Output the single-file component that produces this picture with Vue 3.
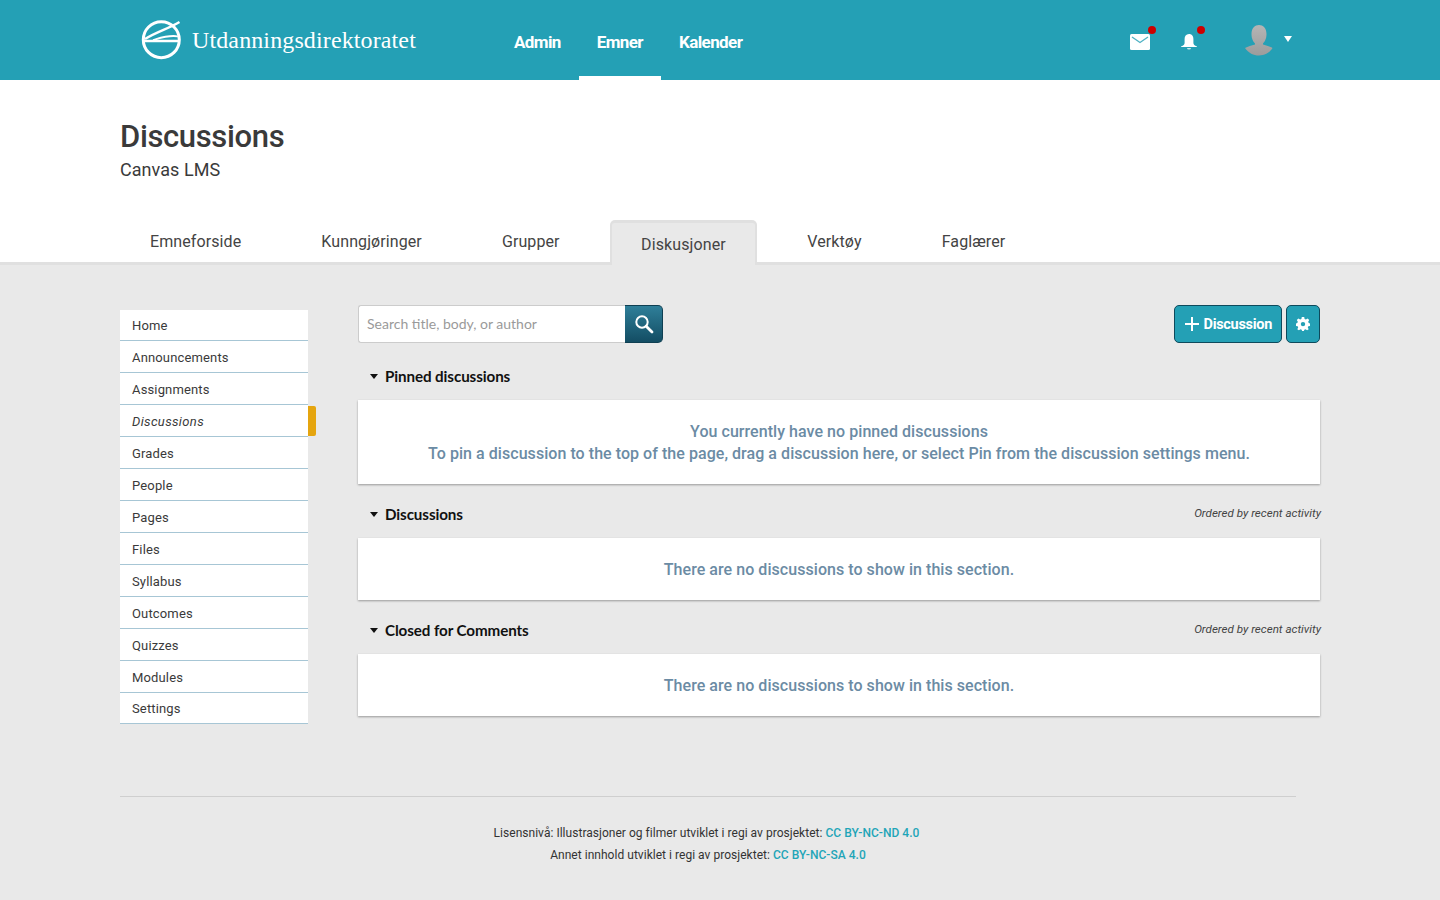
<script setup>
const tabs = ['Emneforside', 'Kunngjøringer', 'Grupper', 'Diskusjoner', 'Verktøy', 'Faglærer']
const side = ['Home', 'Announcements', 'Assignments', 'Discussions', 'Grades', 'People', 'Pages', 'Files', 'Syllabus', 'Outcomes', 'Quizzes', 'Modules', 'Settings']
</script>

<template>
  <div class="page">
    <header class="top">
      <div class="brand">
        <svg class="logo" width="42" height="42" viewBox="0 0 42 42" fill="none" stroke="#fff">
          <circle cx="21.3" cy="20.7" r="18" stroke-width="3" />
          <path d="M4 22H39" stroke-width="2.6" />
          <path d="M5 20C18 12 28 10 39.5 3" stroke-width="2.4" />
          <path d="M13 21C20 19 30 15.5 38 17.5" stroke-width="1.8" />
        </svg>
        <span class="brand-name">Utdanningsdirektoratet</span>
      </div>
      <nav class="mainnav">
        <a>Admin</a>
        <a class="on">Emner</a>
        <a>Kalender</a>
      </nav>
      <div class="tools">
        <span class="tool mail">
          <svg width="20" height="16" viewBox="0 0 20 16">
            <rect width="20" height="16" rx="1.5" fill="#fff" />
            <path d="M2 3l8 5.5L18 3" fill="none" stroke="#4fb2c4" stroke-width="1.3" />
          </svg>
          <i class="dot"></i>
        </span>
        <span class="tool bell">
          <svg width="16" height="16" viewBox="0 0 16 16" fill="#fff">
            <path d="M8 0C5 0 3.6 2.2 3.6 5V9C3.6 10.5 2.5 11.5 0 12.6V13H16V12.6C13.5 11.5 12.4 10.5 12.4 9V5C12.4 2.2 11 0 8 0Z" />
            <path d="M6 14.2H10C9.8 15.8 6.2 15.8 6 14.2Z" />
          </svg>
          <i class="dot"></i>
        </span>
        <span class="avatar">
          <svg width="28" height="31" viewBox="0 0 28 31">
            <defs>
              <linearGradient id="av" x1="0" y1="0" x2="0" y2="1">
                <stop offset="0" stop-color="#b5b5b5" />
                <stop offset="1" stop-color="#9c9c9c" />
              </linearGradient>
            </defs>
            <path fill="url(#av)" d="M14 0C18 0 21.5 3 21.5 9C21.5 14 19.5 17 18 18.5V19.5C21.5 20.5 25 21.5 27.5 23C24.5 28 19.5 30.5 14 30.5C8.5 30.5 3.5 28 0 23C3 21.5 6.5 20.5 10 19.5V18.5C8.5 17 6.5 14 6.5 9C6.5 3 10 0 14 0Z" />
          </svg>
          <i class="caret"></i>
        </span>
      </div>
    </header>

    <section class="title">
      <h1>Discussions</h1>
      <p>Canvas LMS</p>
    </section>

    <div class="tabs">
      <a v-for="t in tabs" :key="t" :class="{ active: t === 'Diskusjoner' }">{{ t }}</a>
    </div>

    <div class="body">
      <aside class="side">
        <a v-for="s in side" :key="s" :class="{ cur: s === 'Discussions' }">{{ s }}</a>
      </aside>

      <main class="main">
        <div class="bar">
          <div class="search">
            <span class="input">Search title, body, or author</span>
            <button class="sbtn" aria-label="Search">
              <svg width="20" height="20" viewBox="0 0 20 20" fill="none" stroke="#fff">
                <circle cx="8" cy="8" r="5.7" stroke-width="2" />
                <path d="M12.2 12.2L18 18" stroke-width="2.8" stroke-linecap="round" />
              </svg>
            </button>
          </div>
          <div class="actions">
            <button class="btn add">
              <svg width="14" height="14" viewBox="0 0 14 14" stroke="#fff" stroke-width="2"><path d="M7 0V14M0 7H14" /></svg>
              Discussion
            </button>
            <button class="btn gear" aria-label="Settings">
              <svg width="14" height="14" viewBox="0 0 14 14">
                <path fill="#fff" fill-rule="evenodd" d="M5.8 0H8.2L8.6 1.9L9.9 2.5L11.6 1.5L13.2 3.1L12.2 4.8L12.7 6L14 6.6V8.9L12.3 9.3L11.8 10.5L12.7 12.2L11.1 13.3L9.5 12.3L8.3 12.8L7.9 14H6.1L5.7 12.8L4.5 12.3L2.9 13.3L1.3 12.2L2.2 10.5L1.7 9.3L0 8.9V6.6L1.3 6L1.8 4.8L0.8 3.1L2.4 1.5L4.1 2.5L5.4 1.9ZM7 4.9A2.2 2.2 0 1 0 7 9.3A2.2 2.2 0 1 0 7 4.9Z" />
              </svg>
            </button>
          </div>
        </div>

        <div class="sec-head first">
          <h2><i class="tri"></i>Pinned discussions</h2>
        </div>
        <div class="card pinned">
          <p>You currently have no pinned discussions</p>
          <p>To pin a discussion to the top of the page, drag a discussion here, or select Pin from the discussion settings menu.</p>
        </div>

        <div class="sec-head">
          <h2><i class="tri"></i>Discussions</h2>
          <em>Ordered by recent activity</em>
        </div>
        <div class="card">
          <p>There are no discussions to show in this section.</p>
        </div>

        <div class="sec-head">
          <h2><i class="tri"></i>Closed for Comments</h2>
          <em>Ordered by recent activity</em>
        </div>
        <div class="card">
          <p>There are no discussions to show in this section.</p>
        </div>
      </main>
    </div>

    <footer class="foot">
      <p class="l1">Lisensnivå: Illustrasjoner og filmer utviklet i regi av prosjektet: <a>CC BY-NC-ND 4.0</a></p>
      <p>Annet innhold utviklet i regi av prosjektet: <a>CC BY-NC-SA 4.0</a></p>
    </footer>
  </div>
</template>

<style>
html, body { margin: 0; background: #e9e9e9; }
</style>

<style scoped>
* { box-sizing: border-box; }
.page { height: 900px; overflow: hidden; background: #e9e9e9; font-family: Roboto, "Noto Sans", sans-serif; color: #333; }
p, h1, h2 { margin: 0; }

.top { height: 80px; background: #24a0b5; display: flex; align-items: stretch; padding-left: 140px; color: #fff; }
.brand { width: 356px; display: flex; align-items: center; gap: 10px; padding-bottom: 1px; }
.logo { flex: none; }
.brand-name { font-family: "Liberation Serif", serif; font-size: 24px; letter-spacing: 0.12px; position: relative; top: 1px; }
.mainnav { display: flex; }
.mainnav a { padding: 34px 18px 0; font-size: 17px; font-weight: 700; letter-spacing: -0.6px; border-bottom: 4px solid transparent; line-height: 17px; }
.mainnav a.on { border-bottom-color: #fff; }
.tools { margin-left: auto; width: 310px; flex: none; position: relative; }
.tool { position: absolute; display: block; }
.tool svg, .avatar svg { display: block; }
.mail { left: 0; top: 34px; }
.bell { left: 51px; top: 34px; }
.dot { position: absolute; width: 8px; height: 8px; border-radius: 50%; background: #cc0000; }
.mail .dot { left: 18px; top: -8px; }
.bell .dot { left: 16px; top: -8px; }
.avatar { position: absolute; left: 115px; top: 25px; }
.caret { position: absolute; left: 39px; top: 11px; width: 0; height: 0; border-left: 4px solid transparent; border-right: 4px solid transparent; border-top: 6px solid #fff; }

.title { background: #fff; height: 140px; padding: 38px 120px 0; }
h1 { font-size: 31px; font-weight: 500; line-height: 38px; color: #3a3a3a; letter-spacing: -0.35px; }
.title p { font-size: 18px; line-height: 24px; margin-top: 2px; color: #3a3a3a; letter-spacing: 0.05px; }

.tabs { background: #fff; height: 45px; padding-left: 120px; display: flex; gap: 20px; border-bottom: 3px solid #e0e0e0; }
.tabs a { padding: 1px 30px 0; font-size: 16px; line-height: 42px; color: #444; letter-spacing: 0.1px; height: 42px; }
.tabs a.active { height: 45px; background: #e9e9e9; border: 3px solid #e0e0e0; border-bottom: 0; border-width: 3px 2px 0; border-radius: 5px 5px 0 0; padding: 0 29.5px; line-height: 44px; position: relative; }

.body { display: flex; align-items: flex-start; padding-left: 120px; }
.side { width: 188px; margin-top: 45px; display: flex; flex-direction: column; background: #fff; position: relative; }
.side a { height: 32px; padding: 9px 12px 0; font-size: 13px; line-height: 16px; color: #3a3a3a; letter-spacing: 0.15px; border-bottom: 1px solid #a7c6d5; position: relative; }
.side a:first-child, .side a:last-child { height: 31px; padding-top: 8px; }
.side a.cur { font-style: italic; letter-spacing: 0.35px; }
.side a.cur::after { content: ""; position: absolute; left: 188px; top: 1px; width: 8px; height: 30px; background: #e5a50f; border-radius: 0 2px 2px 0; }

.main { width: 962px; margin-left: 50px; margin-top: 40px; }
.bar { display: flex; justify-content: space-between; height: 38px; }
.search { display: flex; width: 305px; }
.input { flex: 1; height: 38px; background: #fff; border: 1px solid #ccc; border-right: 0; border-radius: 3px 0 0 3px; padding-left: 8px; font-family: Lato, sans-serif; font-size: 14px; line-height: 36px; color: #9a9a9a; }
.sbtn { width: 38px; height: 38px; padding: 0; border: 1px solid #0f3f52; border-left: 0; border-radius: 0 5px 5px 0; background: linear-gradient(#2f7f99, #134d63); display: flex; align-items: center; justify-content: center; }
.actions { display: flex; gap: 4px; }
.btn { height: 38px; border: 1px solid #0e4a5c; border-radius: 5px; background: #24a0b5; color: #fff; display: flex; align-items: center; justify-content: center; padding: 0; font-family: Roboto, sans-serif; font-size: 14.5px; font-weight: 700; letter-spacing: -0.3px; }
.add { width: 108px; gap: 4.5px; padding-left: 1px; }
.gear { width: 34px; }

.sec-head { height: 22px; margin-top: 19px; margin-bottom: 13px; display: flex; justify-content: space-between; align-items: center; }
.sec-head.first { margin-top: 22px; margin-bottom: 13px; }
h2 { font-family: Lato, sans-serif; font-size: 15.2px; font-weight: 700; color: #111; line-height: 22px; display: flex; align-items: center; padding-left: 12px; letter-spacing: -0.1px; }
.tri { width: 0; height: 0; border-left: 4px solid transparent; border-right: 4px solid transparent; border-top: 5.5px solid #111; margin-right: 7px; }
.sec-head em { font-size: 11.6px; color: #444; margin-top: -2px; margin-right: -1px; }

.card { background: #fff; box-shadow: 0 1px 2px rgba(0,0,0,0.35); height: 62px; padding-top: 2px; display: flex; flex-direction: column; align-items: center; justify-content: center; font-size: 16px; font-weight: 500; line-height: 22px; color: #6b8ba4; letter-spacing: 0.05px; }
.card.pinned { height: 84px; }

.foot { margin: 72px 144px 0 120px; border-top: 1px solid #cfcfcf; padding-top: 25px; text-align: center; font-size: 12px; line-height: 22px; color: #333; letter-spacing: 0.03px; }
.foot .l1 { padding-right: 3px; }
.foot a { color: #1fa5b8; font-weight: 500; }
</style>
